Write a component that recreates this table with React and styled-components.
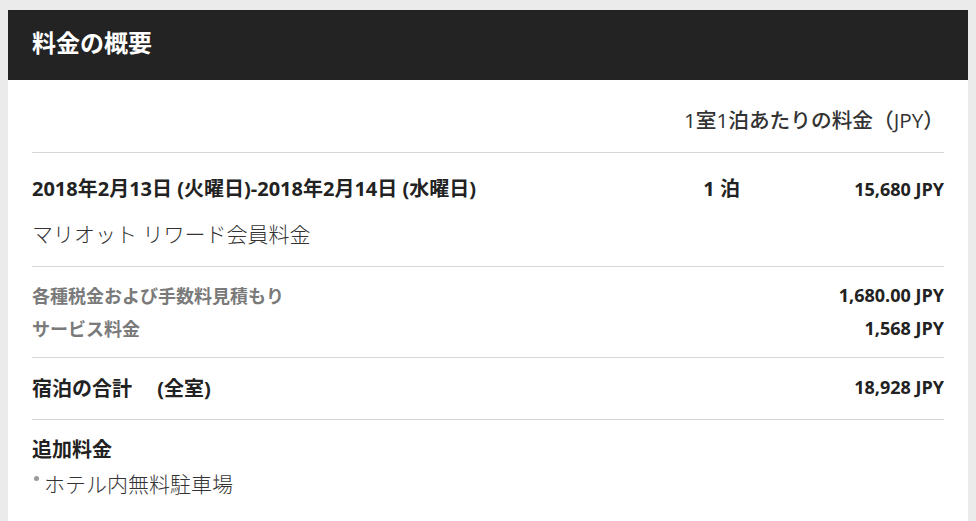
import React from "react";
import styled, { createGlobalStyle } from "styled-components";

const GlobalStyle = createGlobalStyle`
  html, body {
    margin: 0;
    padding: 0;
    background: #ebebeb;
  }
  body {
    font-family: "Open Sans", "Noto Sans CJK JP", sans-serif;
    color: #222;
  }
`;

const Page = styled.div`
  padding: 10px 8px 0 8px;
  height: 521px;
  box-sizing: border-box;
  overflow: hidden;
`;

const Panel = styled.div`
  background: #fff;
  height: 100%;
`;

const Header = styled.div`
  background: #242324;
  height: 70px;
  display: flex;
  align-items: center;
  padding: 0 24px 6px;
  box-sizing: border-box;
`;

const Title = styled.h2`
  margin: 0;
  color: #fff;
  font-size: 24px;
  line-height: 28px;
  font-weight: 700;
  font-family: "Noto Sans CJK JP", sans-serif;
`;

const Body = styled.div`
  padding: 0 24px;
`;

const Section = styled.div`
  border-bottom: ${(p) => (p.last ? "none" : "1px solid #d6d6d6")};
  padding: ${(p) => p.pad || "0"};
`;

const ColumnHead = styled.div`
  display: flex;
  justify-content: flex-end;
  align-items: center;
  height: 72px;
  padding-top: 8px;
  box-sizing: border-box;
  font-size: 20.7px;
  line-height: 24px;
  font-weight: 500;
  color: #333;
`;

const StayRow = styled.div`
  display: grid;
  grid-template-columns: 1fr auto 204px;
  align-items: center;
  line-height: 24px;
`;

const DateText = styled.div`
  font-size: 20px;
  font-weight: 700;
  color: #222;
`;

const Nights = styled.div`
  font-size: 20px;
  font-weight: 700;
  text-align: right;
`;

const Amount = styled.div`
  font-size: 18px;
  font-weight: 700;
  text-align: right;
  color: #222;
`;

const RateName = styled.div`
  font-size: 21px;
  line-height: 28px;
  font-weight: 300;
  color: #333;
  margin-top: 19px;
`;

const FeeRow = styled.div`
  display: flex;
  justify-content: space-between;
  align-items: center;
  height: 33px;
`;

const FeeLabel = styled.div`
  font-size: 18px;
  font-weight: 700;
  color: #7a7a7a;
`;

const TotalRow = styled.div`
  display: flex;
  justify-content: space-between;
  align-items: center;
  height: 58px;
`;

const TotalLabel = styled.div`
  font-size: 20px;
  font-weight: 700;
  color: #222;
  white-space: pre;
`;

const ExtraTitle = styled.div`
  font-size: 20px;
  line-height: 28px;
  font-weight: 700;
  color: #222;
`;

const ExtraList = styled.ul`
  list-style: none;
  margin: 6px 0 0;
  padding: 0;
`;

const ExtraItem = styled.li`
  font-size: 21px;
  line-height: 28px;
  font-weight: 300;
  color: #333;
  display: flex;
  align-items: center;

  &::before {
    content: "";
    width: 5px;
    height: 5px;
    border-radius: 50%;
    background: #9a9a9a;
    margin: -12px 5px 0 2px;
  }
`;

const fees = [
  { label: "各種税金および手数料見積もり", amount: "1,680.00 JPY" },
  { label: "サービス料金", amount: "1,568 JPY" },
];

export default function App() {
  return (
    <>
      <GlobalStyle />
      <Page>
        <Panel>
          <Header>
            <Title>料金の概要</Title>
          </Header>
          <Body>
            <Section>
              <ColumnHead>1室1泊あたりの料金（JPY）</ColumnHead>
            </Section>
            <Section pad="24px 0 18px">
              <StayRow>
                <DateText>2018年2月13日 (火曜日)-2018年2月14日 (水曜日)</DateText>
                <Nights>1 泊</Nights>
                <Amount>15,680 JPY</Amount>
              </StayRow>
              <RateName>マリオット リワード会員料金</RateName>
            </Section>
            <Section pad="11px 0 13px">
              {fees.map((fee) => (
                <FeeRow key={fee.label}>
                  <FeeLabel>{fee.label}</FeeLabel>
                  <Amount>{fee.amount}</Amount>
                </FeeRow>
              ))}
            </Section>
            <Section pad="0 0 3px">
              <TotalRow>
                <TotalLabel>宿泊の合計　 (全室)</TotalLabel>
                <Amount>18,928 JPY</Amount>
              </TotalRow>
            </Section>
            <Section last pad="16px 0 0">
              <ExtraTitle>追加料金</ExtraTitle>
              <ExtraList>
                <ExtraItem>ホテル内無料駐車場</ExtraItem>
              </ExtraList>
            </Section>
          </Body>
        </Panel>
      </Page>
    </>
  );
}
